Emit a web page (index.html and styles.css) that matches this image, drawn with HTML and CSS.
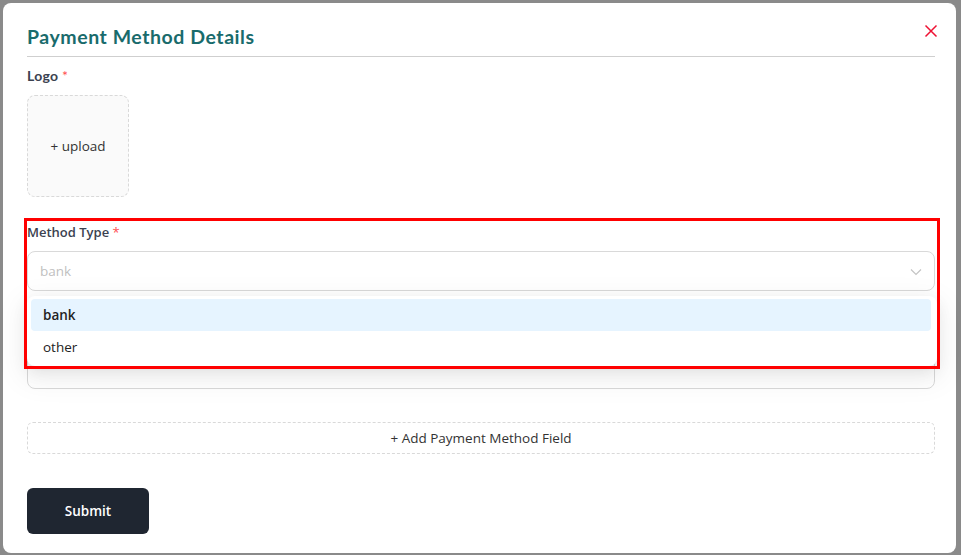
FILE: index.html
```html
<!DOCTYPE html>
<html>
<head>
<meta charset="utf-8">
<link rel="stylesheet" href="styles.css">
</head>
<body>
<div class="page">
  <div class="modal">
    <button class="close" aria-label="close">
      <svg width="14" height="14" viewBox="0 0 14 14"><path d="M1.5 1.5L12.5 12.5M12.5 1.5L1.5 12.5" stroke="#ee1133" stroke-width="1.5" fill="none"/></svg>
    </button>
    <div class="header"><h2 class="title">Payment Method Details</h2></div>
    <form class="form">
      <div class="item">
        <label class="label label-logo">Logo <span class="req">*</span></label>
        <div class="upload">+ upload</div>
      </div>
      <div class="item">
        <label class="label">Method Type <span class="req">*</span></label>
        <div class="select-wrap">
          <div class="select">
            <span class="placeholder">bank</span>
            <svg class="chev" width="12" height="8" viewBox="0 0 12 8"><path d="M1 1.5L6 6.5L11 1.5" stroke="#c4c4c4" stroke-width="1.2" fill="none"/></svg>
          </div>
          <div class="dropdown">
            <div class="option active">bank</div>
            <div class="option">other</div>
          </div>
        </div>
      </div>
      <div class="item item-hidden">
        <label class="label">Method Name <span class="req">*</span></label>
        <div class="input"></div>
      </div>
      <div class="add-field">+ Add Payment Method Field</div>
      <button type="button" class="submit">Submit</button>
    </form>
  </div>
  <div class="annotation"></div>
</div>
</body>
</html>
```
FILE: styles.css
```css
* { box-sizing: border-box; }
html, body { margin: 0; padding: 0; }
body {
  background: #8a8a8a;
  font-family: "Open Sans", "Noto Sans", sans-serif;
  color: rgba(0,0,0,0.88);
  width: 961px;
  height: 555px;
  overflow: hidden;
}
.page {
  position: relative;
  padding: 3px 5px 2px 3px;
  height: 555px;
}
.modal {
  position: relative;
  background: #fff;
  border-radius: 8px;
  height: 550px;
  padding: 20px 21px 0 24px;
}
.close {
  position: absolute;
  top: 16px;
  right: 13px;
  width: 24px;
  height: 24px;
  border: 0;
  background: transparent;
  padding: 0;
  display: flex;
  align-items: center;
  justify-content: center;
}
.header {
  border-bottom: 1px solid #cfcfcf;
  padding-bottom: 5px;
}
.title {
  margin: 0;
  font-family: "Lato", sans-serif;
  font-weight: 700;
  font-size: 19.5px;
  line-height: 28px;
  color: #196b6c;
  letter-spacing: 0.55px;
}
.form {
  display: flex;
  flex-direction: column;
  padding-top: 8px;
}
.item {
  display: flex;
  flex-direction: column;
  margin-bottom: 24px;
}
.label {
  font-size: 13px;
  font-weight: 600;
  line-height: 22px;
  color: #3b4250;
  margin-bottom: 8px;
}
.label-logo { font-family: "Lato", sans-serif; font-weight: 700; font-size: 14px; letter-spacing: 0.3px; }
.req { color: #ff4d4f; font-weight: 400; }
.upload {
  width: 102px;
  height: 102px;
  border: 1px dashed #d9d9d9;
  border-radius: 8px;
  background: #fafafa;
  display: flex;
  align-items: center;
  justify-content: center;
  font-size: 13.5px;
  color: #333;
}
.select-wrap { position: relative; }
.select {
  height: 40px;
  border: 1px solid #d9d9d9;
  border-radius: 8px;
  display: flex;
  align-items: center;
  justify-content: space-between;
  padding: 0 12px;
}
.placeholder { font-size: 13.5px; color: #bfbfbf; }
.chev { margin-top: 1px; }
.dropdown {
  position: absolute;
  left: 0;
  right: -2px;
  top: calc(100% + 5px);
  background: #fff;
  border-radius: 8px;
  padding: 3px 6px 3px 4px;
  box-shadow: 0 6px 16px rgba(0,0,0,0.08), 0 3px 6px -4px rgba(0,0,0,0.12), 0 9px 28px 8px rgba(0,0,0,0.05);
  z-index: 2;
}
.option {
  height: 32px;
  line-height: 32px;
  padding: 0 12px;
  font-size: 13.5px;
  color: #222;
  border-radius: 4px;
}
.option.active { background: #e6f4ff; font-weight: 600; }
.item-hidden { margin-bottom: 33px; }
.item-hidden .label { visibility: hidden; margin-top: 4px; }
.input {
  height: 40px;
  border: 1px solid #d9d9d9;
  border-radius: 8px;
}
.add-field {
  height: 32px;
  border: 1px dashed #d9d9d9;
  border-radius: 6px;
  display: flex;
  align-items: center;
  justify-content: center;
  font-size: 13.5px;
  color: #333;
  margin-bottom: 34px;
}
.submit {
  align-self: flex-start;
  width: 122px;
  height: 46px;
  border: 0;
  border-radius: 6px;
  background: #1f2631;
  color: #fff;
  font-family: "Open Sans", sans-serif;
  font-size: 13.5px;
  font-weight: 600;
}
.annotation {
  position: absolute;
  left: 24px;
  top: 218px;
  width: 916px;
  height: 151px;
  border: 3px solid #ff0000;
  pointer-events: none;
  z-index: 5;
}
```
